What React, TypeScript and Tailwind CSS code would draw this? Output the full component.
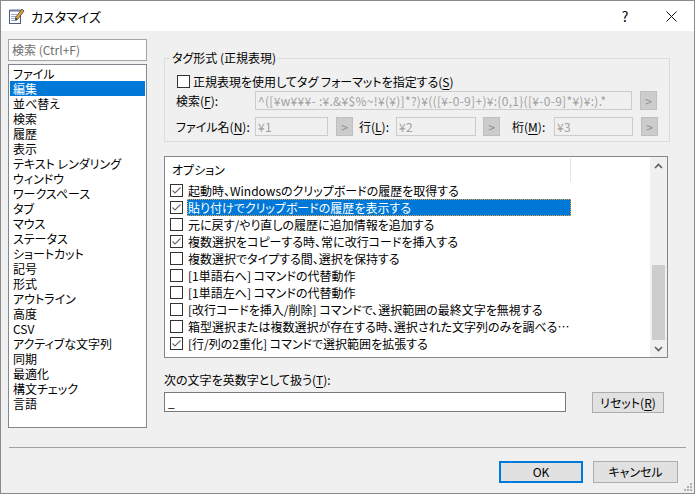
import React from "react";

const categories = [
  "ファイル",
  "編集",
  "並べ替え",
  "検索",
  "履歴",
  "表示",
  "テキスト レンダリング",
  "ウィンドウ",
  "ワークスペース",
  "タブ",
  "マウス",
  "ステータス",
  "ショートカット",
  "記号",
  "形式",
  "アウトライン",
  "高度",
  "CSV",
  "アクティブな文字列",
  "同期",
  "最適化",
  "構文チェック",
  "言語",
];

const options = [
  { label: "起動時、Windowsのクリップボードの履歴を取得する", checked: true },
  { label: "貼り付けでクリップボードの履歴を表示する", checked: true, selected: true },
  { label: "元に戻す/やり直しの履歴に追加情報を追加する", checked: false },
  { label: "複数選択をコピーする時、常に改行コードを挿入する", checked: true },
  { label: "複数選択でタイプする間、選択を保持する", checked: false },
  { label: "[1単語右へ] コマンドの代替動作", checked: false },
  { label: "[1単語左へ] コマンドの代替動作", checked: false },
  { label: "[改行コードを挿入/削除] コマンドで、選択範囲の最終文字を無視する", checked: false },
  { label: "箱型選択または複数選択が存在する時、選択された文字列のみを調べる ([重複の削除]...)", checked: false },
  { label: "[行/列の2重化] コマンドで選択範囲を拡張する", checked: true },
];

// mnemonic letter in parentheses, underlined like a Win32 accelerator
const Key = ({ k }: { k: string }) => (
  <>
    (<u className="underline-offset-2">{k}</u>)
  </>
);

const CheckBox = ({ checked }: { checked: boolean }) => (
  <span className="flex h-[13px] w-[13px] shrink-0 items-center justify-center border border-[#333333] bg-white">
    {checked && (
      <svg width="11" height="11" viewBox="0 0 11 11">
        <polyline points="1.5,5.5 4,8 9.5,2.5" fill="none" stroke="#6a6a6a" strokeWidth="1.1" />
      </svg>
    )}
  </span>
);

const DisabledInput = ({ value, w }: { value: string; w: string }) => (
  <div
    className={`${w} h-[19px] shrink-0 overflow-hidden whitespace-nowrap border border-[#cccccc] bg-[#f0f0f0] pl-[2px] text-[12px] leading-[17px] tracking-[0.3px] text-[#a0a0a0]`}
  >
    {value}
  </div>
);

const DisabledArrow = () => (
  <div className="flex h-[19px] w-[17px] shrink-0 items-center justify-center border border-[#bfbfbf] bg-[#cccccc] text-[12px] leading-none text-[#8f8f8f]">
    &gt;
  </div>
);

const TitleIcon = () => (
  <svg width="17" height="17" viewBox="0 0 17 17">
    <rect x="1.5" y="2.5" width="11" height="13" fill="#ffffff" stroke="#4f5d7a" />
    <rect x="1.5" y="1.5" width="11" height="2" fill="#6a7ca3" />
    <line x1="3" y1="6.5" x2="9" y2="6.5" stroke="#9aaed0" />
    <line x1="3" y1="8.5" x2="8" y2="8.5" stroke="#9aaed0" />
    <line x1="3" y1="10.5" x2="7" y2="10.5" stroke="#9aaed0" />
    <line x1="3" y1="12.5" x2="9" y2="12.5" stroke="#9aaed0" />
    <polygon points="14,1 16,3 9.5,11.5 7.5,9.5" fill="#e3a43a" stroke="#3a3a3a" strokeWidth="0.8" />
    <polygon points="7.5,9.5 9.5,11.5 7,12.5" fill="#2a2a2a" />
  </svg>
);

export default function App() {
  return (
    <div className="flex h-[494px] w-[695px] flex-col border border-[#8a8a8a] bg-[#f0f0f0] font-['Noto_Sans_CJK_JP',sans-serif] text-[12px] text-black [font-feature-settings:'palt']">
      {/* title bar */}
      <div className="flex h-[30px] shrink-0 items-center bg-white">
        <div className="ml-[7px]">
          <TitleIcon />
        </div>
        <span className="ml-[6px] text-[13px] leading-none">カスタマイズ</span>
        <div className="ml-auto flex h-full">
          <div className="flex h-full w-[46px] items-center justify-center text-[14px]">?</div>
          <div className="flex h-full w-[46px] items-center justify-center">
            <svg width="11" height="11" viewBox="0 0 11 11">
              <path d="M0.5 0.5 L10.5 10.5 M10.5 0.5 L0.5 10.5" stroke="#111" strokeWidth="1" />
            </svg>
          </div>
        </div>
      </div>

      {/* main area */}
      <div className="flex h-[416px] shrink-0">
        {/* left category list */}
        <div className="ml-[7px] flex w-[139px] flex-col pt-[8px]">
          <div className="flex h-[22px] items-center border border-[#a5a5a5] bg-white pl-[3px] text-[#6d6d6d]">
            検索 (Ctrl+F)
          </div>
          <div className="mt-[3px] h-[364px] border border-[#828790] bg-white px-[1px] pt-[1px]">
            {categories.map(c => (
              <div
                key={c}
                className={`h-[15px] whitespace-nowrap pl-[3px] leading-[15px] ${
                  c === "編集" ? "bg-[#0078d7] text-white" : ""
                }`}
              >
                {c}
              </div>
            ))}
          </div>
        </div>

        {/* right settings */}
        <div className="ml-[17px] flex w-[504px] flex-col pt-[19px]">
          <fieldset className="border border-[#dcdcdc] px-[11px] pb-[5px]">
            <legend className="ml-[-6px] px-[2px] leading-[16px]">タグ形式 (正規表現)</legend>
            <div className="mt-[8px] ml-[1px] flex h-[15px] items-center gap-[3px]">
              <CheckBox checked={false} />
              <span className="leading-[15px]">
                正規表現を使用してタグ フォーマットを指定する<Key k="S" />
              </span>
            </div>
            <div className="mt-[2px] flex items-center">
              <span className="w-[79px] shrink-0 leading-[19px]">
                検索<Key k="F" />:
              </span>
              <DisabledInput
                w="w-[377px]"
                value="^([¥w¥¥¥- :¥.&¥$%~!¥(¥)]*?)¥(([¥-0-9]+)¥:{0,1}([¥-0-9]*¥)¥:).*"
              />
              <div className="ml-[8px]">
                <DisabledArrow />
              </div>
            </div>
            <div className="mt-[7px] flex items-center">
              <span className="w-[79px] shrink-0 leading-[19px]">
                ファイル名<Key k="N" />:
              </span>
              <DisabledInput w="w-[73px]" value="¥1" />
              <div className="ml-[8px]">
                <DisabledArrow />
              </div>
              <span className="ml-[6px] w-[37px] shrink-0 leading-[19px]">
                行<Key k="L" />:
              </span>
              <DisabledInput w="w-[80px]" value="¥2" />
              <div className="ml-[7px]">
                <DisabledArrow />
              </div>
              <span className="ml-[12px] w-[42px] shrink-0 leading-[19px]">
                桁<Key k="M" />:
              </span>
              <DisabledInput w="w-[79px]" value="¥3" />
              <div className="ml-[8px]">
                <DisabledArrow />
              </div>
            </div>
          </fieldset>

          {/* options list */}
          <div className="mt-[14px] flex h-[202px] border border-[#828790] bg-white">
            <div className="flex flex-1 flex-col">
              <div className="flex h-[25px] shrink-0">
                <div className="w-[405px] pl-[7px] leading-[25px]">オプション</div>
                <div className="mt-[1px] h-[24px] w-[1px] bg-[#e5e5e5]" />
              </div>
              {options.map(o => (
                <div key={o.label} className="flex h-[17px] items-center pl-[5px]">
                  <CheckBox checked={o.checked} />
                  <span
                    className={`ml-[4px] w-[384px] truncate pl-[1px] leading-[17px] ${
                      o.selected
                        ? "bg-[#0078d7] text-white outline outline-1 outline-dotted outline-[#e8a040] -outline-offset-1"
                        : ""
                    }`}
                  >
                    {o.label}
                  </span>
                </div>
              ))}
            </div>
            <div className="flex w-[17px] flex-col bg-[#f0f0f0]">
              <div className="flex h-[17px] items-center justify-center">
                <svg width="9" height="6" viewBox="0 0 9 6">
                  <polyline points="1,5 4.5,1.5 8,5" fill="none" stroke="#606060" strokeWidth="1.6" />
                </svg>
              </div>
              <div className="flex-1" />
              <div className="mx-[2px] h-[75px] bg-[#cdcdcd]" />
              <div className="flex h-[17px] items-center justify-center">
                <svg width="9" height="6" viewBox="0 0 9 6">
                  <polyline points="1,1 4.5,4.5 8,1" fill="none" stroke="#606060" strokeWidth="1.6" />
                </svg>
              </div>
            </div>
          </div>

          <div className="mt-[14px] leading-[16px]">
            次の文字を英数字として扱う<Key k="T" />:
          </div>
          <div className="mt-[4px] flex items-start">
            <div className="h-[20px] w-[402px] border border-[#7a7a7a] bg-white pl-[3px] leading-[18px]">_</div>
            <button className="ml-[26px] h-[21px] w-[72px] border border-[#adadad] bg-[#e1e1e1] leading-[19px]">
              リセット<Key k="R" />
            </button>
          </div>
        </div>
      </div>

      <div className="mx-[8px] h-[1px] shrink-0 bg-[#a0a0a0]" />

      {/* dialog buttons */}
      <div className="relative flex flex-1 items-start justify-end gap-[10px] pr-[16px] pt-[13px]">
        <button className="h-[22px] w-[84px] border-2 border-[#0078d7] bg-[#e1e1e1] leading-[18px]">OK</button>
        <button className="h-[22px] w-[85px] border border-[#adadad] bg-[#e1e1e1] leading-[20px]">キャンセル</button>
        <svg className="absolute bottom-[1px] right-[1px]" width="10" height="10" viewBox="0 0 10 10">
          <g fill="#b0b0b0">
            <rect x="7" y="1" width="2" height="2" />
            <rect x="4" y="4" width="2" height="2" />
            <rect x="7" y="4" width="2" height="2" />
            <rect x="1" y="7" width="2" height="2" />
            <rect x="4" y="7" width="2" height="2" />
            <rect x="7" y="7" width="2" height="2" />
          </g>
        </svg>
      </div>
    </div>
  );
}
